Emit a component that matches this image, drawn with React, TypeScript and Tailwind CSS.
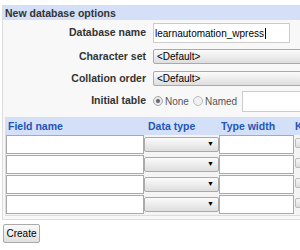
const labelCls = "w-[143px] text-right font-bold text-[10.5px] text-[#333]";
const selectBg = "border border-[#aaa] rounded-[2px] bg-gradient-to-b from-[#fbfbfb] to-[#dedede]";

function RowSelect({ className = "" }: { className?: string }) {
  return (
    <div className={"h-[15px] flex items-center justify-end pr-[4px] text-[7px] text-black " + selectBg + " " + className}>
      ▼
    </div>
  );
}

export default function App() {
  const rows = [0, 1, 2, 3];
  return (
    <div className="w-[300px] h-[250px] bg-white overflow-hidden font-['Liberation_Sans',Arial,sans-serif]">
      <div className="ml-[2px] mt-[5px] w-[330px] border border-[#ddd] bg-[#f8f8f8] pb-[3px]">
        <div className="h-[14px] bg-[#d3e0f7] px-[2px] font-bold text-[10.5px] leading-[14px] text-[#333]">
          New database options
        </div>

        <div className="flex items-center mt-[3px] h-[20px]">
          <div className={labelCls}>Database name</div>
          <div className="ml-[7px] w-[137px] h-[20px] bg-white border border-[#ccc] pl-[1px] flex items-center text-[10px] text-black">
            learnautomation_wpress<span className="ml-[1px] w-px h-[11px] bg-black"></span>
          </div>
        </div>

        <div className="flex items-center mt-[6px] h-[15px]">
          <div className={labelCls}>Character set</div>
          <div className={"ml-[7px] w-[170px] h-[15px] px-[3px] text-[10px] leading-[13px] text-black " + selectBg}>
            &lt;Default&gt;
          </div>
        </div>

        <div className="flex items-center mt-[7px] h-[15px]">
          <div className={labelCls}>Collation order</div>
          <div className={"ml-[7px] w-[170px] h-[15px] px-[3px] text-[10px] leading-[13px] text-black " + selectBg}>
            &lt;Default&gt;
          </div>
        </div>

        <div className="flex items-center mt-[4px] h-[22px]">
          <div className={labelCls}>Initial table</div>
          <div className="ml-[7px] flex items-center text-[10px] text-[#555]">
            <span className="w-[10px] h-[10px] rounded-full border border-[#aaa] bg-[#e8e8e8] flex items-center justify-center mr-[2px]">
              <span className="w-[4px] h-[4px] rounded-full bg-[#666]"></span>
            </span>
            <span>None</span>
            <span className="ml-[4px] mr-[2px] w-[10px] h-[10px] rounded-full border border-[#bbb] bg-[#f0f0f0]"></span>
            <span>Named</span>
            <div className="ml-[5px] w-[80px] h-[21px] bg-white border border-[#ccc]"></div>
          </div>
        </div>

        <div className="ml-[2px] mt-[5px] border border-[#ddd] bg-[#f4f4f4] w-[320px]">
          <div className="flex h-[17px] items-center bg-[#d3e0f7] font-bold text-[10.5px] text-[#2456b8]">
            <div className="w-[138px] pl-[2px]">Field name</div>
            <div className="w-[75px] pl-[4px]">Data type</div>
            <div className="w-[75px] pl-[2px]">Type width</div>
            <div className="pl-[1px]">K</div>
          </div>
          {rows.map((r) => (
            <div key={r} className="flex items-start h-[20px]">
              <div className="w-[138px] h-[19px] border border-[#aaa] bg-white"></div>
              <RowSelect className="w-[75px] mt-[2px]" />
              <div className="w-[75px] h-[19px] border border-[#aaa] bg-white"></div>
              <div className="ml-[1px] mt-[3px] w-[20px] h-[10px] border border-[#bbb] rounded-[2px] bg-gradient-to-b from-[#f8f8f8] to-[#dcdcdc]"></div>
            </div>
          ))}
        </div>
      </div>

      <button className="ml-[3px] mt-[4px] w-[37px] h-[19px] border border-[#aaa] rounded-[2px] bg-gradient-to-b from-[#fafafa] to-[#e0e0e0] text-[10px] leading-[17px] text-black text-center">
        Create
      </button>
    </div>
  );
}
